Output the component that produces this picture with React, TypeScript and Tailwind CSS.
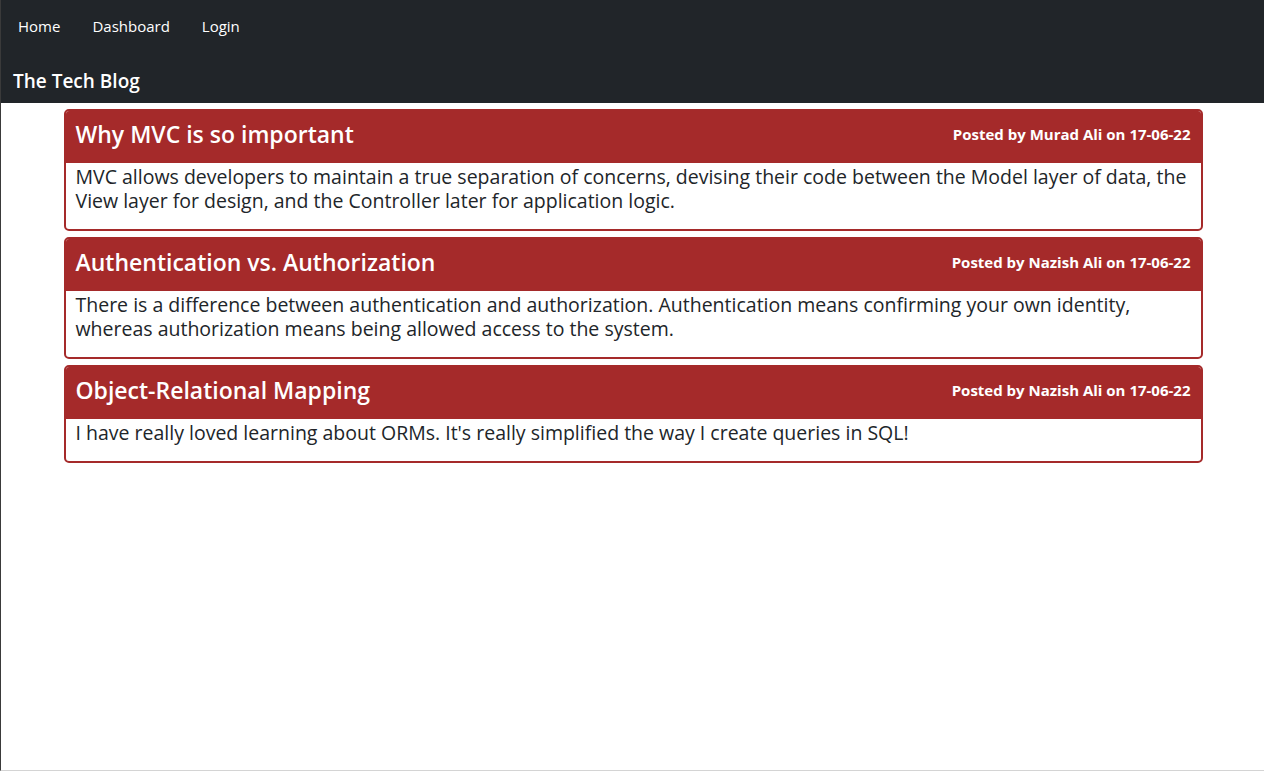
import React from "react";

const posts = [
  {
    title: "Why MVC is so important",
    author: "Murad Ali",
    date: "17-06-22",
    body: "MVC allows developers to maintain a true separation of concerns, devising their code between the Model layer of data, the View layer for design, and the Controller later for application logic.",
  },
  {
    title: "Authentication vs. Authorization",
    author: "Nazish Ali",
    date: "17-06-22",
    body: "There is a difference between authentication and authorization. Authentication means confirming your own identity, whereas authorization means being allowed access to the system.",
  },
  {
    title: "Object-Relational Mapping",
    author: "Nazish Ali",
    date: "17-06-22",
    body: "I have really loved learning about ORMs. It's really simplified the way I create queries in SQL!",
  },
];

export default function App() {
  return (
    <div className="h-[771px] bg-white border-l border-[#3a3a3a] border-b border-b-[#d4d4d4]" style={{ fontFamily: '"Open Sans", "Noto Sans", sans-serif' }}>
      <header className="bg-[#212529] h-[103px] text-white">
        <nav className="flex pl-[1px] pt-[15px] text-[15px] leading-[22px]">
          <a className="px-4">Home</a>
          <a className="px-4">Dashboard</a>
          <a className="px-4">Login</a>
        </nav>
        <h1 className="pl-[12px] mt-[31px] text-[19px] leading-[26px] font-semibold">The Tech Blog</h1>
      </header>
      <main className="w-[1140px] mx-auto pt-[6px] pl-[1px]">
        {posts.map((p) => (
          <div key={p.title} className="mb-[6px] border-2 border-[#a52a2a] rounded-[5px] overflow-hidden">
            <div className="bg-[#a52a2a] text-white flex items-center justify-between h-[52px] px-[10px] pb-[6px]">
              <h2 className="text-[23px] font-semibold leading-[30px]">{p.title}</h2>
              <span className="text-[15px] font-bold">Posted by {p.author} on {p.date}</span>
            </div>
            <p className="px-[10px] pt-[2px] pb-[16px] text-[19.5px] leading-[24px] text-[#212529]">{p.body}</p>
          </div>
        ))}
      </main>
    </div>
  );
}
